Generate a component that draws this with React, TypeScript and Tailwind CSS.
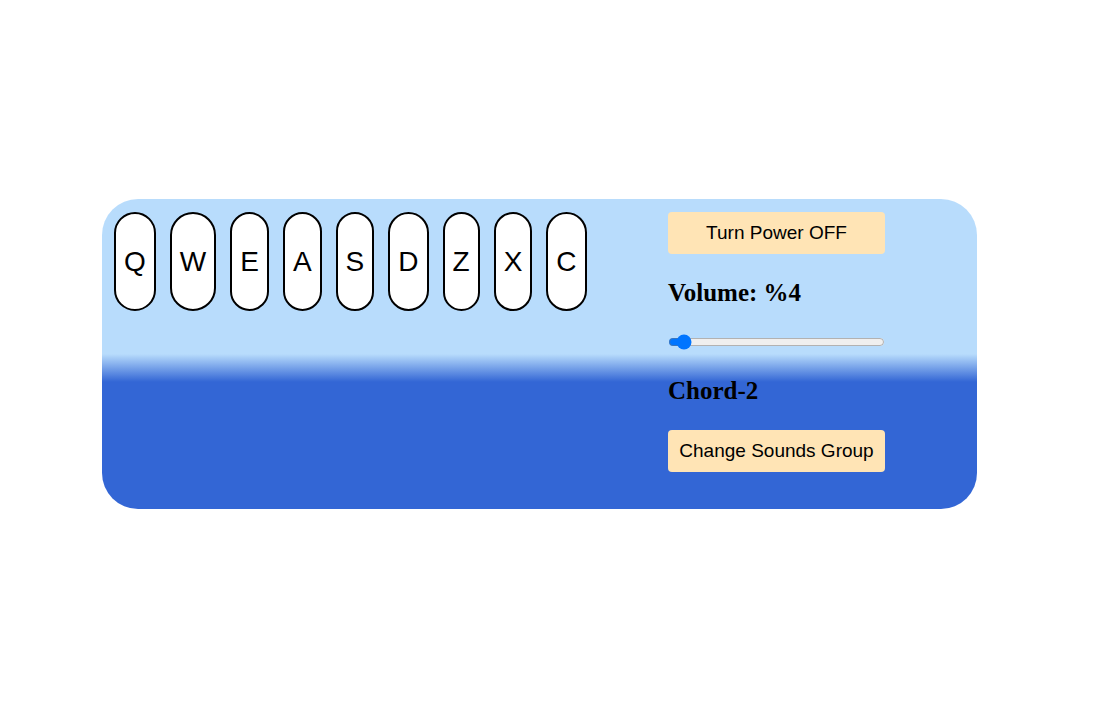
export default function App() {
  const keys = ["Q", "W", "E", "A", "S", "D", "Z", "X", "C"];

  return (
    <div className="min-h-[704px] w-[1120px] bg-white pt-[199px] pl-[102px]">
      <div className="flex h-[310px] w-[875px] rounded-[36px] bg-[linear-gradient(to_bottom,#b8dcfc_50%,#3366d5_59%)] px-3 pt-[13px]">
        {/* Drum pads */}
        <div className="flex w-[554px] items-start gap-[14px]">
          {keys.map((k) => (
            <button
              key={k}
              className="flex h-[99px] items-center justify-center rounded-full border-2 border-black bg-white px-2 text-[28px] text-black font-['Liberation_Sans',Arial,sans-serif]"
            >
              {k}
            </button>
          ))}
        </div>

        {/* Controls */}
        <div className="flex w-[217px] flex-col">
          <button className="h-[42px] w-[217px] rounded bg-[#ffe4b5] text-[19px] text-black font-['Liberation_Sans',Arial,sans-serif]">
            Turn Power OFF
          </button>
          <p className="mt-[25px] h-[28px] text-[25px] leading-[28px] font-bold text-black font-['Liberation_Serif','Times_New_Roman',serif]">
            Volume: %4
          </p>
          <input
            type="range"
            min={0}
            max={100}
            value={4}
            readOnly
            className="mt-[27px] h-4 w-[217px]"
          />
          <p className="mt-[27px] h-[28px] text-[25px] leading-[28px] font-bold text-black font-['Liberation_Serif','Times_New_Roman',serif]">
            Chord-2
          </p>
          <button className="mt-[25px] h-[42px] w-[217px] rounded bg-[#ffe4b5] text-[19px] text-black font-['Liberation_Sans',Arial,sans-serif]">
            Change Sounds Group
          </button>
        </div>
      </div>
    </div>
  );
}
